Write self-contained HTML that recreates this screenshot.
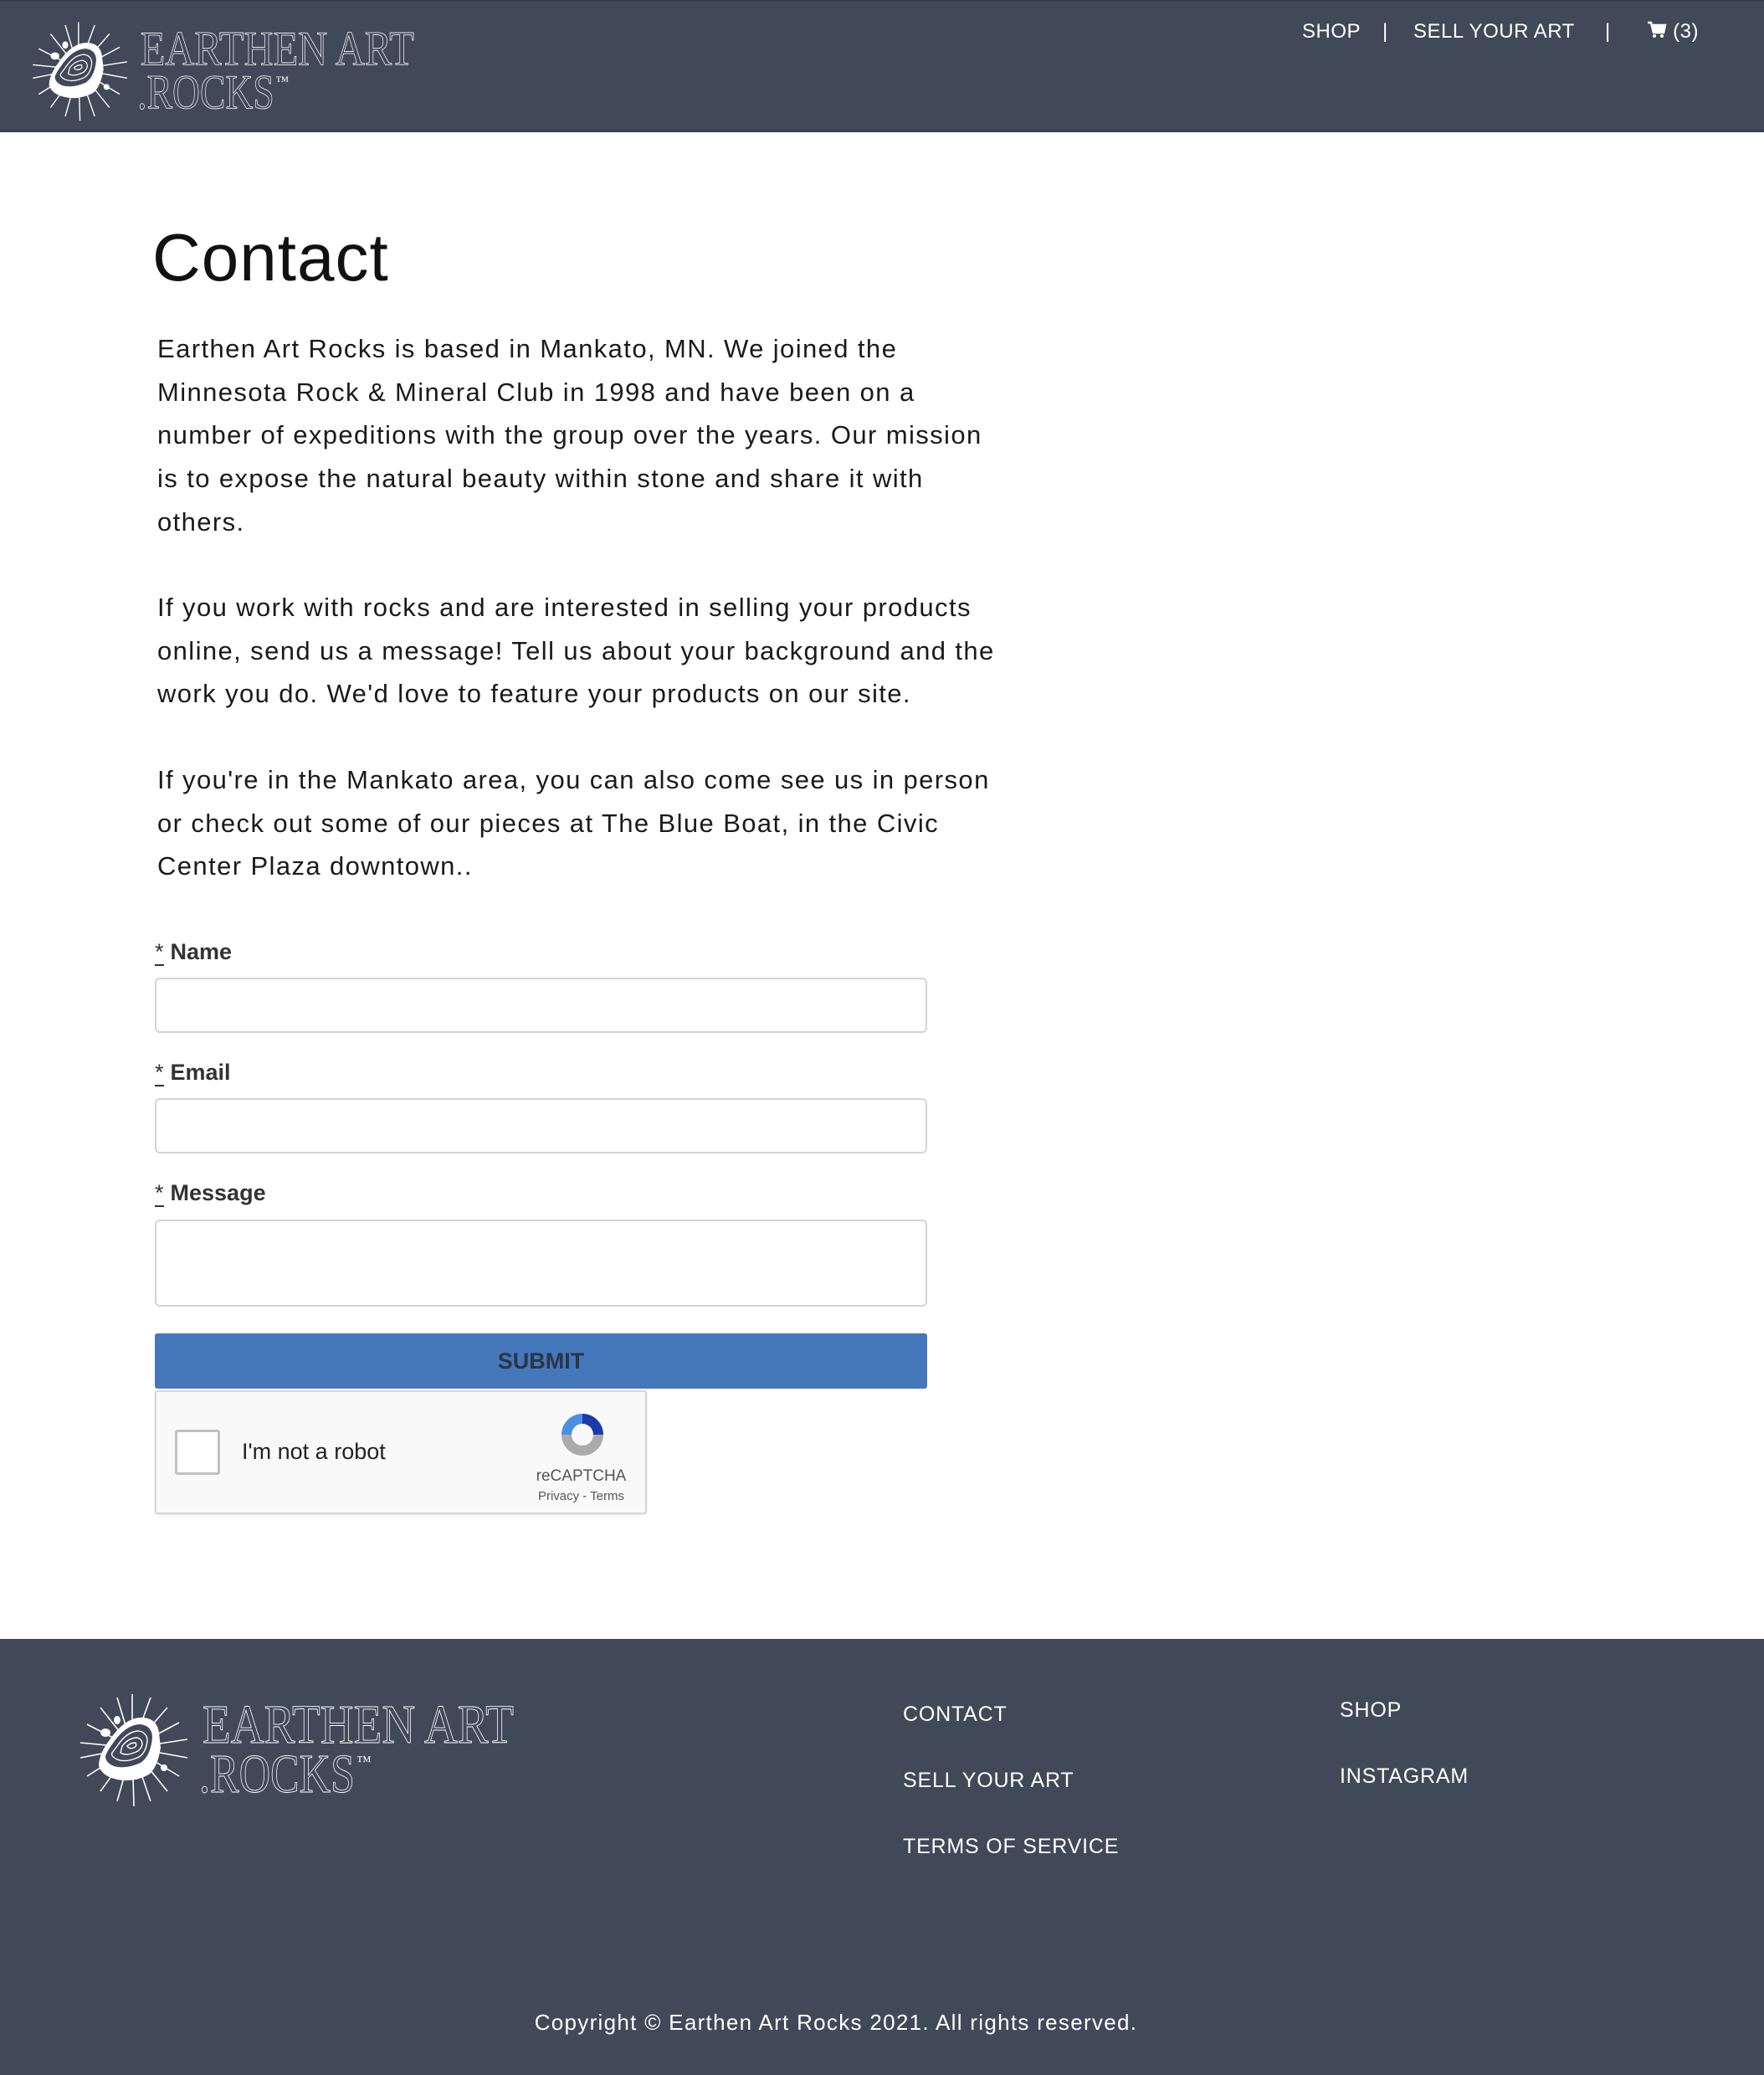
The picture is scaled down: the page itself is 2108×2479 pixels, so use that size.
<!DOCTYPE html>
<html><head><meta charset="utf-8">
<style>
*{margin:0;padding:0;box-sizing:border-box}
body{width:2108px;height:2479px;position:relative;background:#fff;font-family:"Liberation Sans",sans-serif;overflow:hidden}
.hdr{position:absolute;left:0;top:0;width:2108px;height:158px;background:#414858;border-top:2px solid #363c4a;border-bottom:3px solid #3a404e}
.nav{position:absolute;top:22px;color:#fff;font-size:24px;letter-spacing:0.5px}
h1{position:absolute;left:182px;top:262px;font-size:80px;font-weight:normal;color:#111;letter-spacing:1px}
.p{position:absolute;left:188px;white-space:nowrap;font-size:31px;line-height:51.7px;color:#1a1a1a;letter-spacing:1.4px}
.lbl{position:absolute;left:185px;font-size:27px;font-weight:bold;color:#333}
.lbl u{font-weight:normal;text-decoration:none;border-bottom:2px solid #333;margin-right:8px}
.in{position:absolute;left:185px;width:923px;border:2px solid #d4d4d4;border-radius:6px;background:#fff}
.btn{position:absolute;left:185px;top:1593px;width:923px;height:66px;background:#4577bb;border-radius:3px;color:#2b3545;font-weight:bold;font-size:27px;text-align:center;line-height:66px}
.cap{position:absolute;left:185px;top:1661px;width:588px;height:148px;background:#f9f9f9;border:2px solid #d6d6d6;border-radius:3px;box-shadow:0 1px 3px rgba(0,0,0,.1)}
.ftr{position:absolute;left:0;top:1958px;width:2108px;height:521px;background:#414858}
.fl{position:absolute;color:#fff;font-size:25px;letter-spacing:0.8px}
</style></head><body>
<svg width="0" height="0" style="position:absolute">
<defs>
<g id="logo">
<g stroke="#fff" stroke-width="1.6" fill="none">
<line x1="68" y1="78" x2="68" y2="14"/><line x1="68" y1="78" x2="50" y2="18"/><line x1="68" y1="78" x2="90" y2="18"/>
<line x1="68" y1="78" x2="30" y2="30"/><line x1="68" y1="78" x2="110" y2="30"/><line x1="68" y1="78" x2="14" y2="50"/>
<line x1="68" y1="78" x2="124" y2="48"/><line x1="68" y1="78" x2="6" y2="72"/><line x1="68" y1="78" x2="134" y2="68"/>
<line x1="68" y1="78" x2="6" y2="90"/><line x1="68" y1="78" x2="134" y2="90"/><line x1="68" y1="78" x2="14" y2="112"/>
<line x1="68" y1="78" x2="124" y2="112"/><line x1="68" y1="78" x2="30" y2="130"/><line x1="68" y1="78" x2="110" y2="130"/>
<line x1="68" y1="78" x2="50" y2="142"/><line x1="68" y1="78" x2="90" y2="142"/><line x1="68" y1="78" x2="70" y2="148"/>
</g>
<path d="M40 70 Q60 40 82 42 Q98 44 100 60 L102 78 Q98 102 88 110 Q70 120 50 116 Q32 112 28 100 Q28 86 40 70Z" fill="#fff"/>
<path d="M44 74 Q60 50 78 50 Q92 52 92 66 Q90 88 78 96 Q60 104 46 100 Q36 96 36 88 Q38 82 44 74Z" fill="#414858"/>
<g stroke="#fff" stroke-width="1.4" fill="none">
<path d="M50 76 Q62 58 76 58 Q86 60 86 70 Q84 86 74 90 Q60 96 50 92 Q42 88 44 84Z"/>
<path d="M56 76 Q64 66 74 66 Q80 68 80 74 Q78 82 70 84 Q60 88 54 84Z"/>
<path d="M62 76 Q66 72 72 72 Q74 76 70 78 Q64 80 62 76Z"/>
</g>
<ellipse cx="50" cy="45" rx="4" ry="5" fill="#fff"/><ellipse cx="36" cy="60" rx="6" ry="5" fill="#fff"/><circle cx="106" cy="102" r="4" fill="#fff"/>
<text x="152" y="72" font-family="Liberation Serif,serif" font-size="66" fill="none" stroke="#fff" stroke-width="0.9" textLength="372" lengthAdjust="spacingAndGlyphs">EARTHEN ART</text>
<text x="148" y="131" font-family="Liberation Serif,serif" font-size="66" fill="none" stroke="#fff" stroke-width="0.9" textLength="186" lengthAdjust="spacingAndGlyphs">.ROCKS</text>
<text x="336" y="100" font-family="Liberation Serif,serif" font-size="18" fill="#fff">™</text>
</g>
</defs></svg>

<div class="hdr">
<svg style="position:absolute;left:34px;top:12px" width="475" height="141" viewBox="0 0 540 160"><use href="#logo"/></svg>
<div class="nav" style="left:1556px">SHOP</div>
<div class="nav" style="left:1652px">|</div>
<div class="nav" style="left:1689px">SELL YOUR ART</div>
<div class="nav" style="left:1918px">|</div>
<div class="nav" style="left:1968px"><svg width="24" height="22" viewBox="0 0 24 22" style="vertical-align:-2px"><path d="M1 2h4l3 12h12l2-9H7" stroke="#fff" stroke-width="2.5" fill="#fff"/><circle cx="9" cy="18" r="2" fill="#fff"/><circle cx="18" cy="18" r="2" fill="#fff"/></svg> (3)</div>
</div>

<h1>Contact</h1>
<div class="p" style="top:391px">Earthen Art Rocks is based in Mankato, MN. We joined the<br>Minnesota Rock &amp; Mineral Club in 1998 and have been on a<br>number of expeditions with the group over the years. Our mission<br>is to expose the natural beauty within stone and share it with<br>others.</div>
<div class="p" style="top:700px">If you work with rocks and are interested in selling your products<br>online, send us a message! Tell us about your background and the<br>work you do. We'd love to feature your products on our site.</div>
<div class="p" style="top:906px">If you're in the Mankato area, you can also come see us in person<br>or check out some of our pieces at The Blue Boat, in the Civic<br>Center Plaza downtown..</div>

<div class="lbl" style="top:1122px"><u>*</u>Name</div>
<div class="in" style="top:1168px;height:66px"></div>
<div class="lbl" style="top:1266px"><u>*</u>Email</div>
<div class="in" style="top:1312px;height:66px"></div>
<div class="lbl" style="top:1410px"><u>*</u>Message</div>
<div class="in" style="top:1457px;height:104px"></div>
<div class="btn">SUBMIT</div>
<div class="cap">
<div style="position:absolute;left:22px;top:45px;width:54px;height:54px;border:3px solid #c1c1c1;border-radius:3px;background:#fff"></div>
<div style="position:absolute;left:102px;top:56px;font-size:27px;color:#222">I'm not a robot</div>
<svg style="position:absolute;left:478px;top:20px" width="62" height="62" viewBox="0 0 62 62"><path d="M31 6 A25 25 0 0 1 56 31 L44 31 A13 13 0 0 0 31 18Z" fill="#1c3aa9"/><path d="M6 31 A25 25 0 0 1 31 6 L31 18 A13 13 0 0 0 18 31Z" fill="#4a90e2"/><path d="M6 31 A25 25 0 0 0 56 31 L44 31 A13 13 0 0 1 18 31Z" fill="#ababab"/></svg>
<div style="position:absolute;left:445px;top:90px;width:125px;text-align:center;font-size:19px;color:#555">reCAPTCHA</div>
<div style="position:absolute;left:445px;top:116px;width:125px;text-align:center;font-size:15px;color:#555">Privacy - Terms</div>
</div>

<div class="ftr">
<svg style="position:absolute;left:90px;top:52px" width="540" height="160" viewBox="0 0 540 160"><use href="#logo"/></svg>
<div class="fl" style="left:1079px;top:76px">CONTACT</div>
<div class="fl" style="left:1079px;top:155px">SELL YOUR ART</div>
<div class="fl" style="left:1079px;top:234px">TERMS OF SERVICE</div>
<div class="fl" style="left:1601px;top:71px">SHOP</div>
<div class="fl" style="left:1601px;top:150px">INSTAGRAM</div>
<div class="fl" style="left:0;width:1998px;text-align:center;top:443px;font-size:26px;letter-spacing:1.3px">Copyright © Earthen Art Rocks 2021. All rights reserved.</div>
</div>
</body></html>
